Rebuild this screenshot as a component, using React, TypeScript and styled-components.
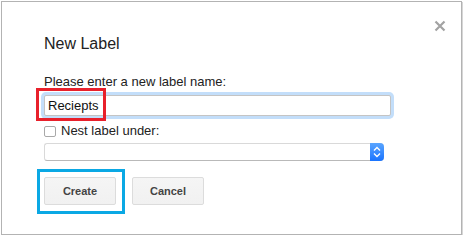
import React, { useState } from "react";
import styled, { createGlobalStyle } from "styled-components";

const GlobalStyle = createGlobalStyle`
  html, body {
    margin: 0;
    padding: 0;
    background: #ffffff;
  }
  body {
    font-family: "Liberation Sans", Arial, sans-serif;
    color: #222222;
  }
`;

const Dialog = styled.div`
  position: relative;
  box-sizing: border-box;
  margin: 1px 0 0 1px;
  width: 461px;
  height: 234px;
  padding: 34px 42px 0 42px;
  background: #ffffff;
  border: 1px solid #b3b3b3;
  box-shadow: 1px 1px 0 #d6d6d6;
`;

const CloseButton = styled.button`
  position: absolute;
  top: 17px;
  right: 15px;
  width: 13px;
  height: 13px;
  padding: 0;
  border: none;
  background: transparent;
  cursor: pointer;
  display: flex;
  align-items: center;
  justify-content: center;
`;

const Title = styled.div`
  font-size: 16px;
  line-height: 16px;
  color: #222222;
`;

const FieldLabel = styled.div`
  margin-top: 22px;
  font-size: 13px;
  line-height: 15px;
  color: #222222;
`;

const InputWrap = styled.div`
  position: relative;
  margin-top: 6px;
  width: 347px;
`;

const TextInput = styled.input`
  box-sizing: border-box;
  display: block;
  width: 347px;
  height: 21px;
  padding: 0 3px;
  border: 1px solid #c4c4c4;
  border-radius: 2px;
  font-family: "Liberation Sans", Arial, sans-serif;
  font-size: 13px;
  color: #111111;
  outline: none;
  box-shadow: 0 0 0 3px #c3defa;
`;

const Highlight = styled.div<{ $color: string }>`
  position: absolute;
  box-sizing: border-box;
  border: 3px solid ${(p) => p.$color};
  pointer-events: none;
`;

const CheckRow = styled.label`
  margin-top: 7px;
  display: flex;
  align-items: center;
  gap: 5px;
  font-size: 13px;
  line-height: 15px;
  color: #222222;
`;

const CheckBox = styled.input`
  appearance: none;
  box-sizing: border-box;
  margin: 1px 0 0 0;
  width: 12px;
  height: 11px;
  border: 1px solid #a9a9a9;
  border-radius: 2px;
  background: #ffffff;
`;

const SelectBox = styled.div`
  margin-top: 5px;
  box-sizing: border-box;
  width: 340px;
  height: 18px;
  display: flex;
  border: 1px solid #d9d9d9;
  border-bottom-color: #b9b9b9;
  border-right: none;
  border-radius: 3px 4px 4px 3px;
  background: #ffffff;
`;

const SelectValue = styled.div`
  flex: 1;
`;

const SelectArrow = styled.div`
  width: 14px;
  margin: -1px 0;
  border-radius: 0 4px 4px 0;
  background: linear-gradient(#5aa5ff, #1a74ff);
  display: flex;
  align-items: center;
  justify-content: center;
`;

const ButtonRow = styled.div`
  margin-top: 16px;
  display: flex;
  gap: 16px;
`;

const ButtonWrap = styled.div`
  position: relative;
`;

const Button = styled.button`
  box-sizing: border-box;
  width: 72px;
  height: 28px;
  padding: 0;
  border: 1px solid #dcdcdc;
  border-radius: 2px;
  background: linear-gradient(#f5f5f5, #f1f1f1);
  font-family: "Liberation Sans", Arial, sans-serif;
  font-size: 11px;
  font-weight: 700;
  color: #444444;
  cursor: pointer;
`;

export default function App() {
  const [name, setName] = useState<string>("Reciepts");
  const [nest, setNest] = useState<boolean>(false);

  return (
    <>
      <GlobalStyle />
      <Dialog>
        <CloseButton aria-label="Close">
          <svg width="12" height="12" viewBox="0 0 12 12">
            <path d="M1.5 1.5 L10.5 10.5 M10.5 1.5 L1.5 10.5" stroke="#a3a3a3" strokeWidth="2.2" />
          </svg>
        </CloseButton>
        <Title>New Label</Title>
        <FieldLabel>Please enter a new label name:</FieldLabel>
        <InputWrap>
          <TextInput value={name} onChange={(e) => setName(e.target.value)} />
          <Highlight $color="#e8202b" style={{ left: -8, top: -7, width: 70, height: 33 }} />
        </InputWrap>
        <CheckRow>
          <CheckBox type="checkbox" checked={nest} onChange={(e) => setNest(e.target.checked)} />
          Nest label under:
        </CheckRow>
        <SelectBox>
          <SelectValue />
          <SelectArrow>
            <svg width="8" height="12" viewBox="0 0 8 12">
              <path d="M1 4.5 L4 1.5 L7 4.5 M1 7.5 L4 10.5 L7 7.5" stroke="#ffffff" strokeWidth="1.4" fill="none" />
            </svg>
          </SelectArrow>
        </SelectBox>
        <ButtonRow>
          <ButtonWrap>
            <Button>Create</Button>
            <Highlight $color="#0aa8e4" style={{ left: -7, top: -8, width: 88, height: 45 }} />
          </ButtonWrap>
          <Button>Cancel</Button>
        </ButtonRow>
      </Dialog>
    </>
  );
}
